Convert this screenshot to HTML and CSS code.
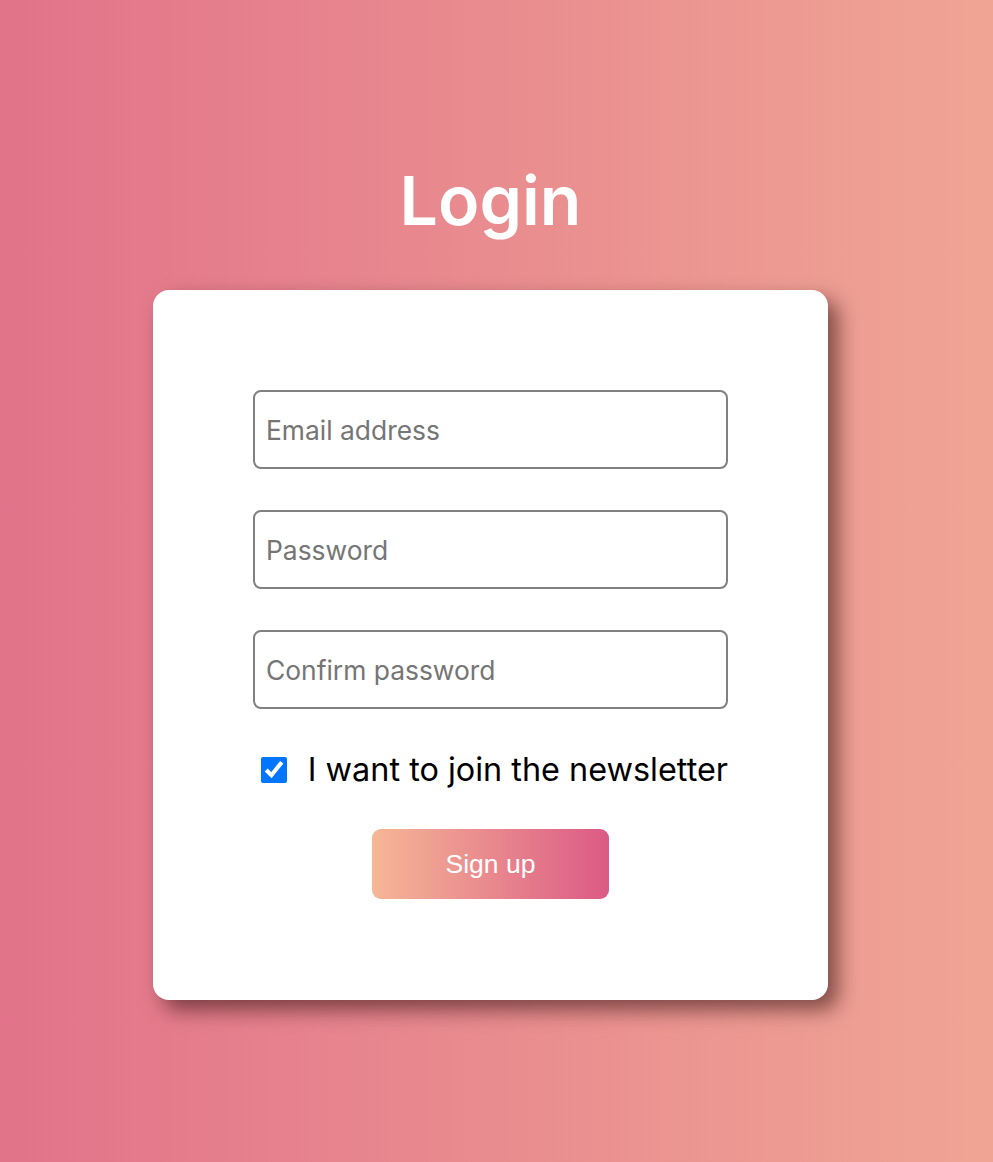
FILE: index.html
```html
<!DOCTYPE html>
<html lang="en">
<head>
<meta charset="utf-8">
<title>Login</title>
<link rel="stylesheet" href="styles.css">
</head>
<body>
<main class="page">
  <h1 class="title">Login</h1>
  <form class="card">
    <input class="field" type="email" placeholder="Email address">
    <input class="field" type="password" placeholder="Password">
    <input class="field" type="password" placeholder="Confirm password">
    <label class="check">
      <input class="check-box" type="checkbox" checked>
      <span>I want to join the newsletter</span>
    </label>
    <button class="submit" type="button">Sign up</button>
  </form>
</main>
</body>
</html>
```

FILE: styles.css
```css
* { box-sizing: border-box; }
html, body { margin: 0; height: 100%; }
body {
  background: linear-gradient(to right, #e2738a, #f0a594);
  font-family: Inter, "Noto Sans", sans-serif;
}
.page {
  display: flex;
  flex-direction: column;
  align-items: center;
  padding: 150px 12px 0 0;
}
.title {
  margin: 0 0 40px;
  color: #ffffff;
  font-size: 68px;
  font-weight: 600;
  line-height: 100px;
}
.card {
  width: 675px;
  padding: 100px 100px 101px;
  background: #ffffff;
  border-radius: 16px;
  box-shadow: 10px 10px 20px rgba(40, 10, 10, 0.55);
  display: flex;
  flex-direction: column;
  align-items: center;
}
.field {
  width: 475px;
  height: 79px;
  margin-bottom: 41px;
  padding: 0 11px;
  border: 2px solid #808080;
  border-radius: 8px;
  font-family: Inter, "Noto Sans", sans-serif;
  font-size: 26.4px;
  color: #000;
  outline: none;
}
.field::placeholder { color: #757575; }
.check {
  display: flex;
  align-items: center;
  gap: 21px;
  width: 475px;
  justify-content: flex-end;
  font-size: 32.4px;
  color: #000;
  line-height: 40px;
}
.check-box {
  width: 26px;
  height: 26px;
  margin: 0;
}
.submit {
  margin-top: 39px;
  width: 237px;
  height: 70px;
  border: none;
  border-radius: 9px;
  background: linear-gradient(to right, #f5b796, #dc5a85);
  color: #ffffff;
  font-family: "Liberation Sans", Arial, sans-serif;
  font-size: 26.5px;
}
```
